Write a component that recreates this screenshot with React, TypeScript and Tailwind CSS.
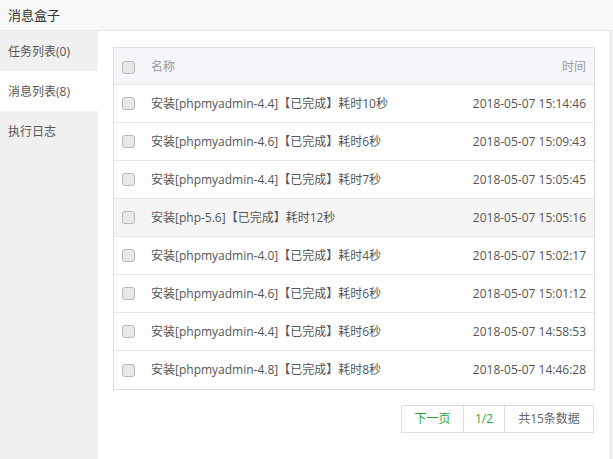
const ROWS = [
  { name: "安装[phpmyadmin-4.4]【已完成】耗时10秒", time: "2018-05-07 15:14:46" },
  { name: "安装[phpmyadmin-4.6]【已完成】耗时6秒", time: "2018-05-07 15:09:43" },
  { name: "安装[phpmyadmin-4.4]【已完成】耗时7秒", time: "2018-05-07 15:05:45" },
  { name: "安装[php-5.6]【已完成】耗时12秒", time: "2018-05-07 15:05:16", hover: true },
  { name: "安装[phpmyadmin-4.0]【已完成】耗时4秒", time: "2018-05-07 15:02:17" },
  { name: "安装[phpmyadmin-4.6]【已完成】耗时6秒", time: "2018-05-07 15:01:12" },
  { name: "安装[phpmyadmin-4.4]【已完成】耗时6秒", time: "2018-05-07 14:58:53" },
  { name: "安装[phpmyadmin-4.8]【已完成】耗时8秒", time: "2018-05-07 14:46:28" },
];

const MENU = [
  { label: "任务列表(0)", active: false },
  { label: "消息列表(8)", active: true },
  { label: "执行日志", active: false },
];

function Checkbox() {
  return (
    <span className="block w-[13px] h-[13px] rounded-[3px] border border-[#b9b9b9] bg-[#e8e8e8] shrink-0" />
  );
}

export default function App() {
  return (
    <div
      className="w-[613px] h-[459px] flex flex-col bg-[#f0f0f0] overflow-hidden text-[12px] text-[#555]"
      style={{ fontFamily: '"Open Sans", "Noto Sans CJK SC", sans-serif' }}
    >
      {/* title bar */}
      <div className="h-[31px] shrink-0 flex items-center px-[8px] pt-[1px] bg-[#f8f8f8] border-b border-[#eaeaea] text-[13px] text-[#333]">
        消息盒子
      </div>

      <div className="flex flex-1 min-h-0">
        {/* side menu */}
        <div className="w-[98px] shrink-0 bg-[#f0f0f0]">
          {MENU.map((m) => (
            <div
              key={m.label}
              className={`h-[40px] flex items-center px-[8px] pt-[1px] text-[#555] ${m.active ? "bg-white" : ""}`}
            >
              {m.label}
            </div>
          ))}
        </div>

        {/* content */}
        <div className="w-[513px] shrink-0 bg-white border-r border-[#e4e4e4] pt-[16px] px-[15px]">
          <div className="border border-[#dddddd]">
            <div className="h-[37px] flex items-center bg-[#f5f6fa] border-b border-[#e4e4e4] pl-[8px] pr-[8px] pt-[2px] text-[#999]">
              <Checkbox />
              <span className="ml-[16px] flex-1">名称</span>
              <span>时间</span>
            </div>
            {ROWS.map((r, i) => (
              <div
                key={i}
                className={`h-[38px] flex items-center pl-[8px] pr-[8px] ${
                  i < ROWS.length - 1 ? "border-b border-[#e6e6e6]" : ""
                } ${r.hover ? "bg-[#f5f5f5]" : ""}`}
              >
                <Checkbox />
                <span className="ml-[16px] flex-1">{r.name}</span>
                <span>{r.time}</span>
              </div>
            ))}
          </div>

          {/* pager */}
          <div className="flex justify-end mt-[15px] pr-[1px]">
            <div className="flex h-[28px] border border-[#dddddd]">
              <span className="w-[62px] flex items-center justify-center text-[#20a53a] border-r border-[#dddddd]">
                下一页
              </span>
              <span className="w-[41px] flex items-center justify-center text-[#20a53a] border-r border-[#dddddd]">
                1/2
              </span>
              <span className="w-[88px] flex items-center justify-center text-[#666]">共15条数据</span>
            </div>
          </div>
        </div>
      </div>
    </div>
  );
}
